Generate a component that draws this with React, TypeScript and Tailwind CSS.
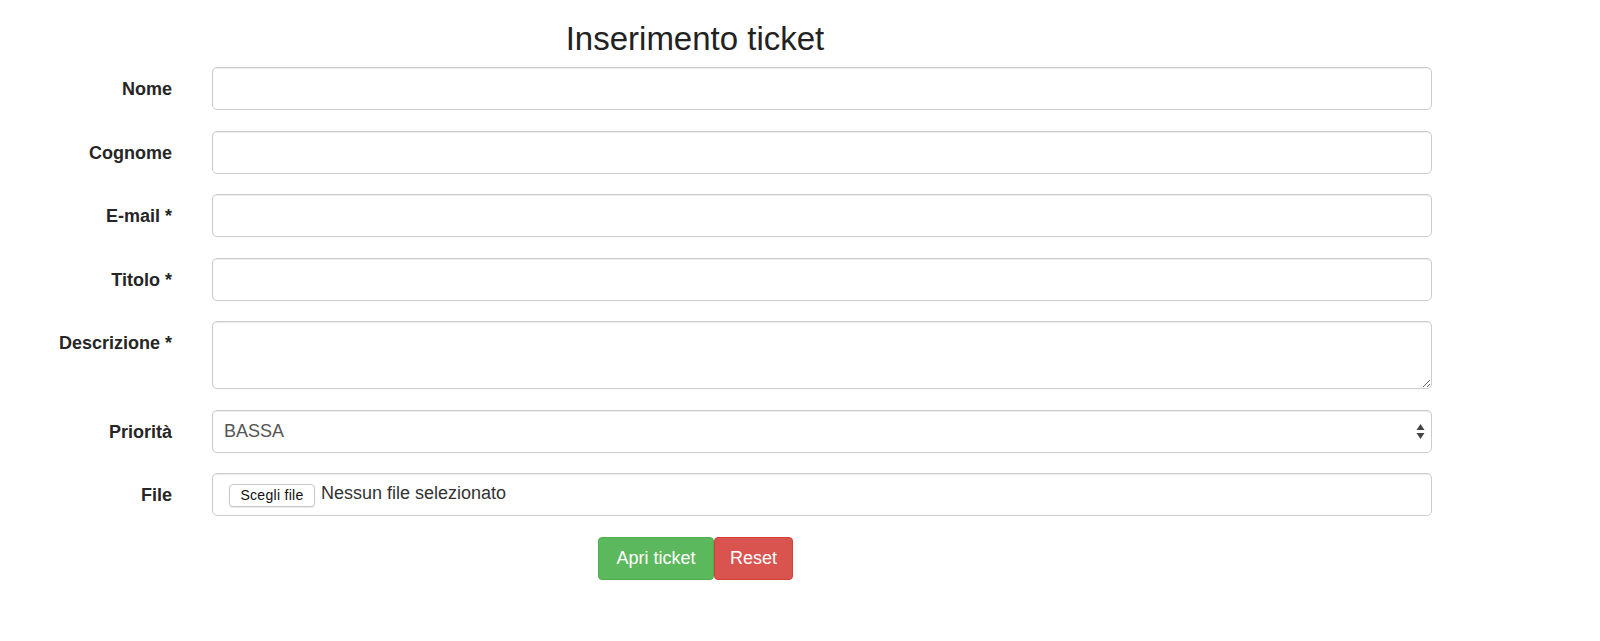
import React from "react";

const labelCls =
  "w-[172px] h-[43px] shrink-0 text-right font-bold text-[18px] leading-[45px] text-[#262626]";
const boxCls =
  "w-[1220px] h-[43px] bg-white border border-[#cccccc] rounded-[5px] shadow-[inset_0_1px_1px_rgba(0,0,0,0.075)]";

function Row({ label, children }: { label: string; children: React.ReactNode }) {
  return (
    <div className="flex items-start gap-[40px]">
      <label className={labelCls}>{label}</label>
      {children}
    </div>
  );
}

export default function App() {
  return (
    <div
      className="w-[1600px] h-[641px] bg-white text-[#333]"
      style={{ fontFamily: '"Liberation Sans", Arial, sans-serif' }}
    >
      <h1 className="w-[1390px] text-center text-[33px] leading-[36px] font-normal text-[#222] pt-[21px] h-[67px]">
        Inserimento ticket
      </h1>
      <div className="flex flex-col gap-[20.5px]">
        <Row label="Nome">
          <input className={boxCls} />
        </Row>
        <Row label="Cognome">
          <input className={boxCls} />
        </Row>
        <Row label="E-mail *">
          <input className={boxCls} />
        </Row>
        <Row label="Titolo *">
          <input className={boxCls} />
        </Row>
        <Row label="Descrizione *">
          <textarea className="w-[1220px] h-[68px] bg-white border border-[#cccccc] rounded-[5px] shadow-[inset_0_1px_1px_rgba(0,0,0,0.075)] block" />
        </Row>
        <Row label="Priorità">
          <div className="relative">
            <select className={boxCls + " appearance-none pl-[11px] pt-[1px] text-[18px] text-[#555] outline-none"}>
              <option>BASSA</option>
            </select>
            <svg
              className="absolute right-[7px] top-[13px] pointer-events-none"
              width="9"
              height="17"
              viewBox="0 0 9 17"
            >
              <path d="M4.5 1 L8.5 7 L0.5 7 Z" fill="#444" />
              <path d="M4.5 16 L8.5 10 L0.5 10 Z" fill="#444" />
            </svg>
          </div>
        </Row>
        <Row label="File">
          <div className={boxCls + " flex items-center pl-[16px] gap-[6px]"}>
            <span className="w-[86px] h-[23px] mt-[2px] flex items-center justify-center border border-[#c8c8c8] rounded-[4px] bg-white text-[14px] tracking-[0.3px] text-[#111] shadow-[0_1px_1px_rgba(0,0,0,0.08)]">
              Scegli file
            </span>
            <span className="text-[18px] text-[#333] -mt-[3px]">Nessun file selezionato</span>
          </div>
        </Row>
        <div className="flex pl-[598px]">
          <button className="w-[116px] h-[43px] pt-[1px] bg-[#5cb85c] border border-[#4cae4c] rounded-[4px] text-white text-[18px]">
            Apri ticket
          </button>
          <button className="w-[79px] h-[43px] pt-[1px] bg-[#d9534f] border border-[#d43f3a] rounded-[4px] text-white text-[18px]">
            Reset
          </button>
        </div>
      </div>
    </div>
  );
}
